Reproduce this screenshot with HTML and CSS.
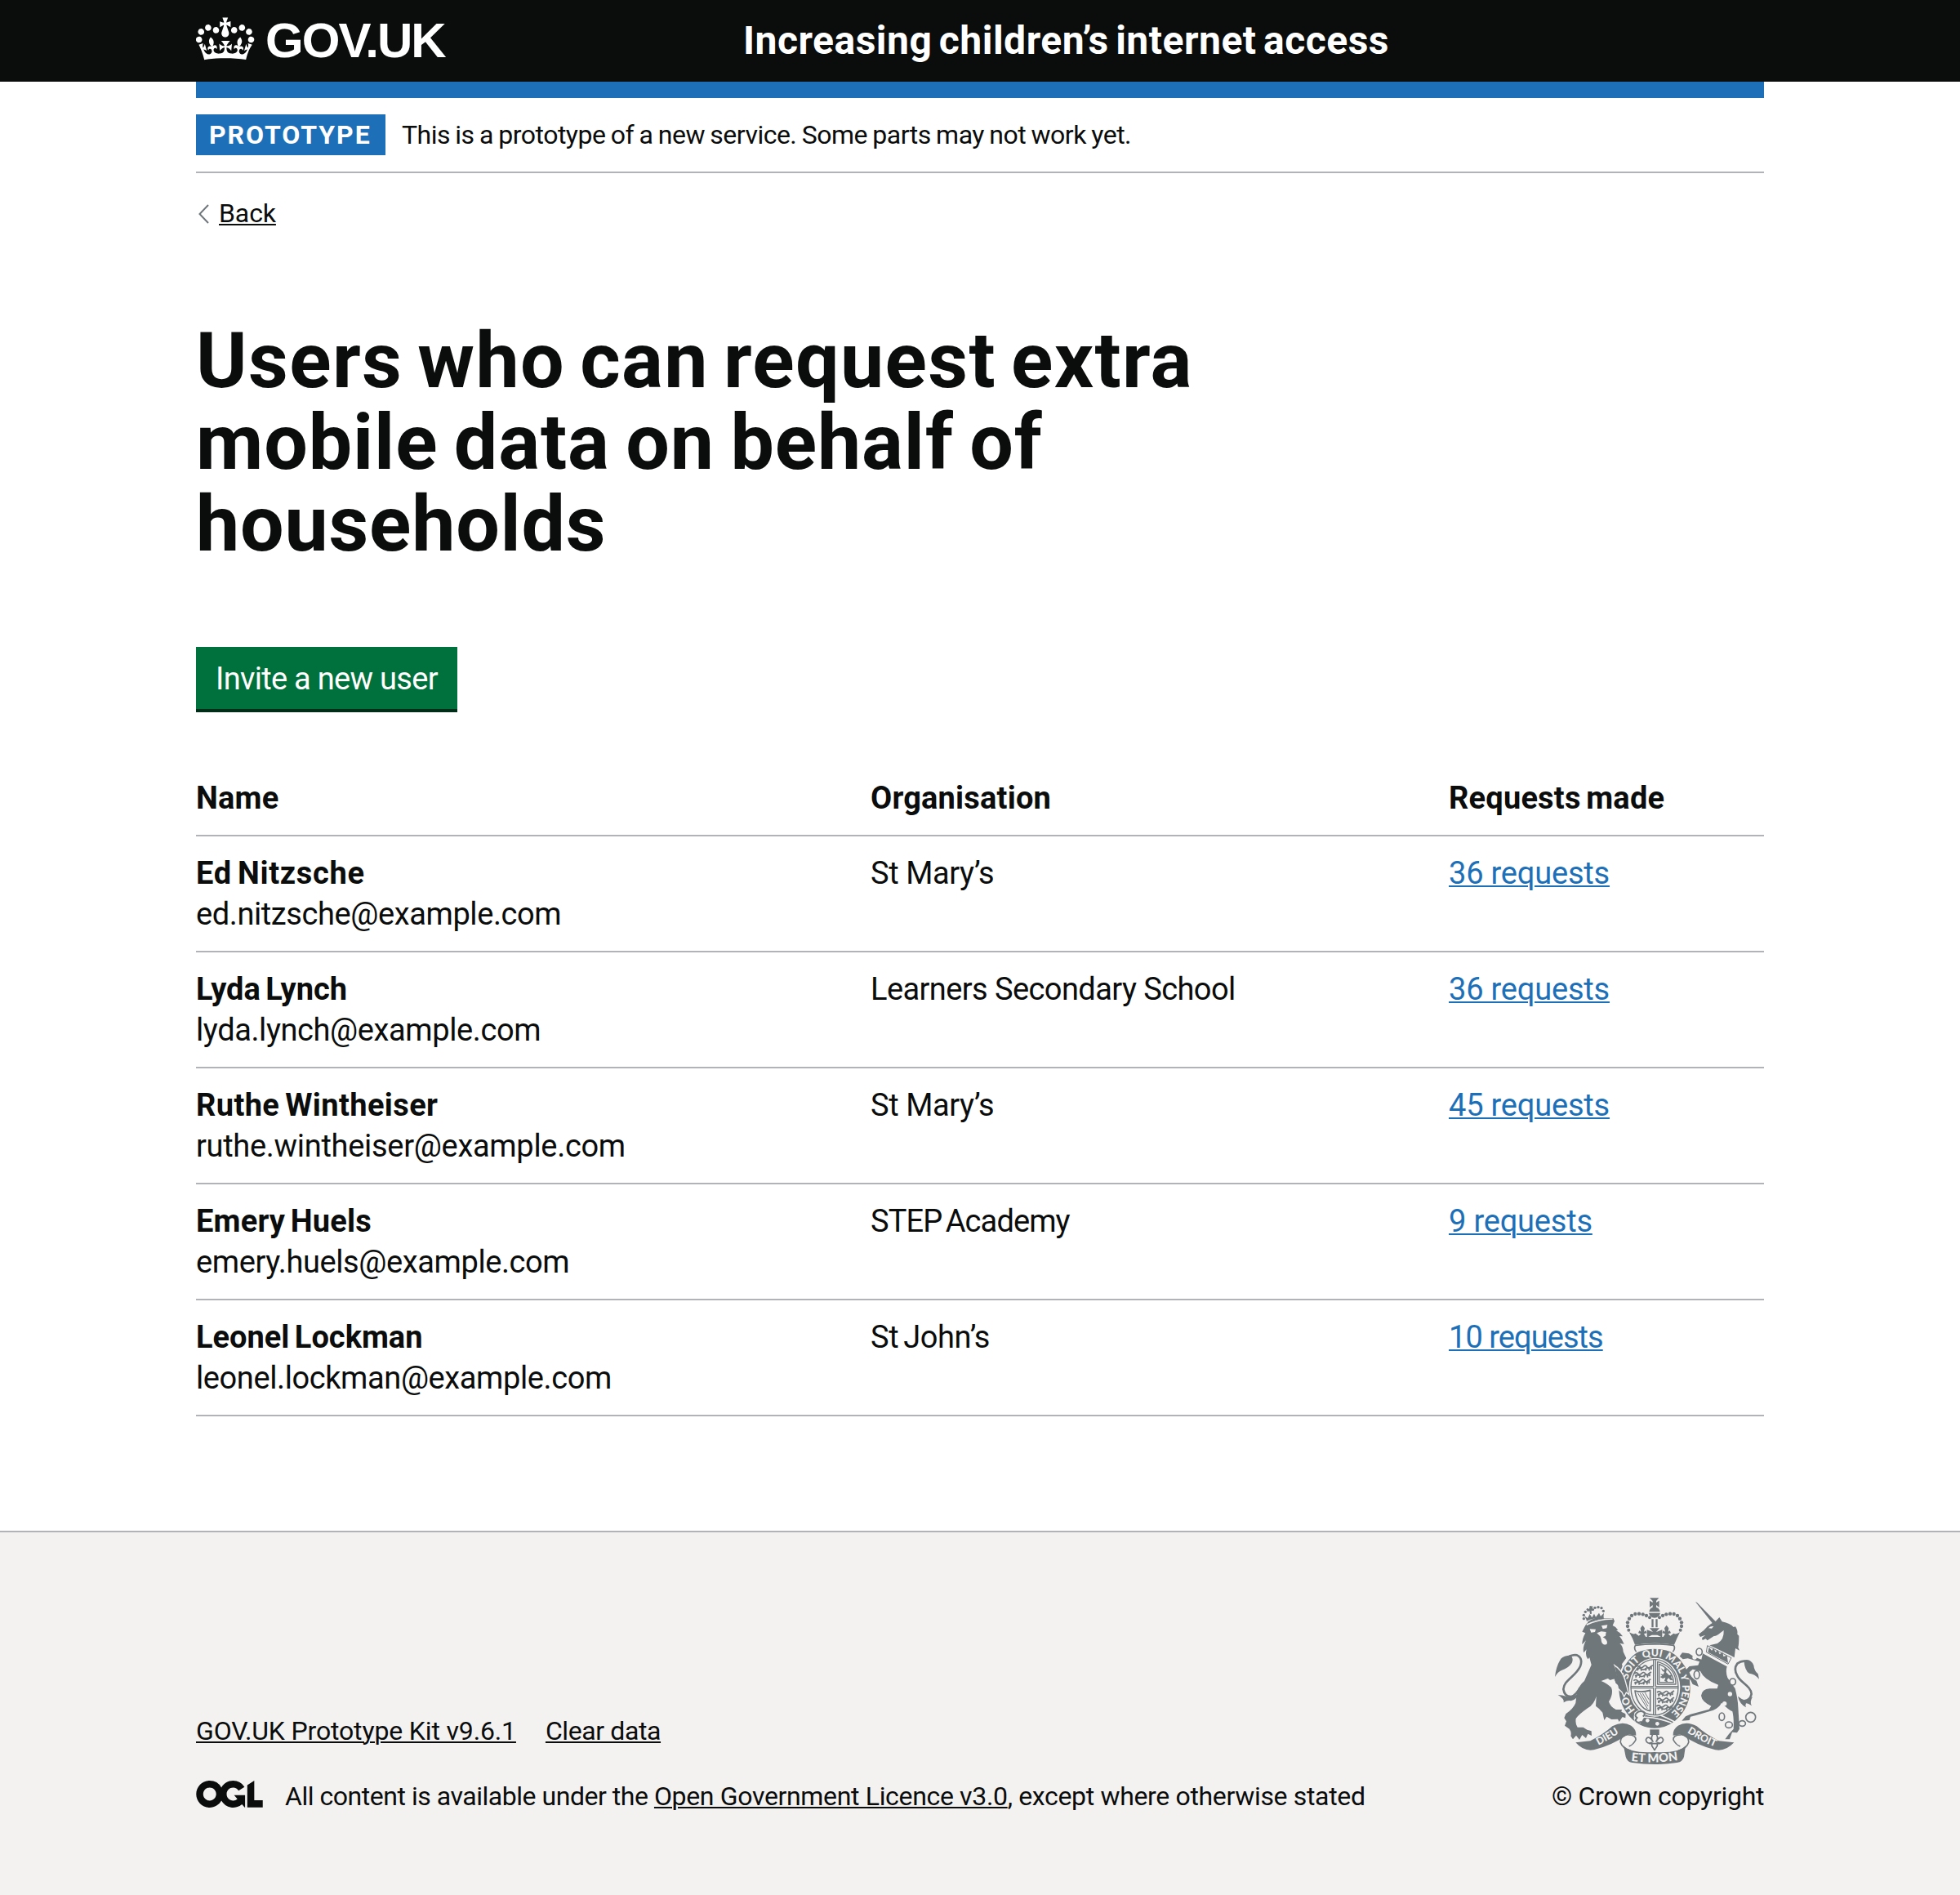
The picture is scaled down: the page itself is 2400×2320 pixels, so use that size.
FILE: index.html
```
<!DOCTYPE html>
<html lang="en">
<head>
<meta charset="utf-8">
<title>Users who can request extra mobile data on behalf of households</title>
<link rel="stylesheet" href="styles.css">
</head>
<body>
<header class="header">
  <div class="container header-inner">
    <a class="logo" href="#">
      <svg class="crown" viewBox="0 0 36 32" aria-hidden="true"><path fill="currentColor" fill-rule="evenodd" d="M6.7 12.2c1 .4 2.1-.1 2.5-1s-.1-2.1-1-2.5c-1-.4-2.1.1-2.5 1-.4 1 0 2.1 1 2.5m-4.3 2.5c1 .4 2.1-.1 2.5-1s-.1-2.1-1-2.5c-1-.4-2.1.1-2.5 1-.5 1 0 2.1 1 2.5m-1.3 4.8c1 .4 2.1-.1 2.5-1 .4-1-.1-2.1-1-2.5-1-.4-2.1.1-2.5 1-.4 1 0 2.1 1 2.5m10.4-5.8c1 .4 2.1-.1 2.5-1s-.1-2.1-1-2.5c-1-.4-2.1.1-2.5 1s0 2.1 1 2.5m17.4-1.5c-1 .4-2.1-.1-2.5-1s.1-2.1 1-2.5c1-.4 2.1.1 2.5 1 .5 1 0 2.1-1 2.5m4.3 2.5c-1 .4-2.1-.1-2.5-1s.1-2.1 1-2.5c1-.4 2.1.1 2.5 1 .5 1 0 2.1-1 2.5m1.3 4.8c-1 .4-2.1-.1-2.5-1-.4-1 .1-2.1 1-2.5 1-.4 2.1.1 2.5 1 .4 1 0 2.1-1 2.5m-10.4-5.8c-1 .4-2.1-.1-2.5-1s.1-2.1 1-2.5c1-.4 2.1.1 2.5 1s0 2.1-1 2.5m-5.3-4.9 2.4 1.3V6.5l-2.4.8c-.1-.1-.1-.1-.2-.1s1-3 1-3h-3.4l1 3c-.1.1-.2.1-.2.1-.1.1-2.4-.7-2.4-.7v3.5L17 8.8c-.1.1 0 .2.1.3l-1.4 4.2c-.1.2-.1.4-.1.7 0 1.1.8 2.1 1.9 2.2h.8c1.1-.1 1.9-1.1 1.9-2.2 0-.2-.1-.4-.1-.7l-1.4-4.2c.1-.1.1-.2.1-.3m-1 20.3c4.6 0 8.9.3 12.8.9 1.1-4.6 2.4-7.2 3.8-9.1l-2.6-.9c.3 1.3.3 1.9 0 2.8-.4-.4-.8-1.2-1.1-2.4l-1.2 4.2c.8-.5 1.4-.9 2-.9-1.2 2.6-2.7 3.2-3.6 3-1.2-.2-1.7-1.3-1.5-2.2.3-1.3 1.6-1.6 2.2-.1 1.2-2.4-.8-3.1-2.1-2.4 1.9-1.9 2.2-3.6.6-5.7-2.2 1.7-2.2 3.3-1.2 5.6-1.3-1.5-3.3-.7-2.5 1.7.9-1.4 2.1-.5 2 .8-.2 1.2-1.7 2.1-3.7 1.9-2.8-.2-3-2.2-3-3.7.7-.1 1.9.5 2.9 2l.4-4.4c-1.1 1.2-2.2 1.4-3.3 1.4.4-1.2 2.1-3.1 2.1-3.1h-5.4s1.8 1.9 2.1 3.1c-1.1 0-2.3-.3-3.3-1.4l.4 4.4c1-1.5 2.2-2.1 2.9-2-.1 1.6-.2 3.5-3 3.7-1.9.2-3.5-.7-3.7-1.9-.2-1.3 1-2.2 1.9-.8.7-2.4-1.2-3.1-2.5-1.7 1-2.3 1-4-1.2-5.6-1.6 2-1.3 3.8.6 5.7-1.3-.7-3.2 0-2.1 2.4.6-1.5 1.9-1.1 2.2.1.2.9-.4 2-1.5 2.2-1 .2-2.4-.4-3.6-3 .6 0 1.2.4 2 .9l-1.2-4.2c-.3 1.1-.7 1.9-1.1 2.4-.3-.8-.2-1.5 0-2.8l-2.6.9C2.7 23 4 25.5 5.1 30.1c3.9-.7 8.2-1 12.9-1"/></svg>
      <span class="logo-text">GOV.UK</span>
    </a>
    <a class="service-name" href="#">Increasing children’s internet access</a>
  </div>
</header>

<div class="container">
  <div class="blue-bar"></div>
  <div class="phase-banner">
    <strong class="tag">PROTOTYPE</strong>
    <span class="phase-text">This is a prototype of a new service. Some parts may not work yet.</span>
  </div>
  <a class="back" href="#">
    <svg class="chevron" viewBox="0 0 18 26" aria-hidden="true"><path d="M15 2 4.500 13 15 24" fill="none" stroke="#6f777b" stroke-width="2"/></svg>
    <span class="back-text">Back</span>
  </a>

  <main class="main">
    <h1 class="heading">
      <span class="line-a">Users who can request extra</span>
      <span class="line-b">mobile data on behalf of</span>
      <span class="line-c">households</span>
    </h1>
    <a class="button" href="#">Invite a new user</a>
    <table class="table">
      <colgroup><col class="col-name"><col class="col-org"><col class="col-requests"></colgroup>
      <thead>
        <tr><th>Name</th><th>Organisation</th><th>Requests made</th></tr>
      </thead>
      <tbody>
        <tr><td><b class="wide">Ed Nitzsche</b><br>ed.nitzsche@example.com</td><td>St Mary’s</td><td><a class="link" href="#">36 requests</a></td></tr>
        <tr><td><b class="tight">Lyda Lynch</b><br>lyda.lynch@example.com</td><td class="org-long">Learners Secondary School</td><td><a class="link" href="#">36 requests</a></td></tr>
        <tr><td><b class="medium">Ruthe Wintheiser</b><br><span class="email-long">ruthe.wintheiser@example.com</span></td><td>St Mary’s</td><td><a class="link" href="#">45 requests</a></td></tr>
        <tr><td><b>Emery Huels</b><br>emery.huels@example.com</td><td class="org-tight">STEP Academy</td><td><a class="link" href="#">9 requests</a></td></tr>
        <tr><td><b class="tight">Leonel Lockman</b><br>leonel.lockman@example.com</td><td class="org-short">St John’s</td><td><a class="link link-tight" href="#">10 requests</a></td></tr>
      </tbody>
    </table>
  </main>
</div>

<footer class="footer">
  <div class="container footer-inner">
    <div class="footer-meta">
      <div class="footer-links">
        <a class="kit" href="#">GOV.UK Prototype Kit v9.6.1</a>
        <a class="clear" href="#">Clear data</a>
      </div>
      <div class="licence">
        <svg class="ogl" viewBox="0 0 483.200 195.700" aria-hidden="true"><path fill="currentColor" d="M421.500 142.800V.1l-50.700 32.300v161.100h112.400v-50.700zm-122.300-9.600A47.120 47.120 0 0 1 221 97.800c0-26 21.100-47.100 47.100-47.100 16.700 0 31.400 8.700 39.700 21.800l42.700-27.200A97.630 97.630 0 0 0 268.100 0c-36.500 0-68.300 20.100-85.100 49.700A98 98 0 0 0 97.800 0C43.900 0 0 43.900 0 97.800s43.900 97.800 97.800 97.800c36.500 0 68.300-20.100 85.100-49.700a97.760 97.760 0 0 0 149.600 25.400l19.400 22.200h3v-87.800h-80l24.300 27.500zM97.800 145c-26 0-47.100-21.100-47.100-47.100s21.100-47.100 47.100-47.100 47.100 21.100 47.100 47.100S123.800 145 97.800 145"/></svg>
        <span class="licence-text"><span class="licence-lead">All content is available under the </span><a href="#">Open Government Licence v3.0</a>, except where otherwise stated</span>
      </div>
    </div>
    <a class="copyright" href="#">
      <svg class="crest" viewBox="60 72 780 630" role="img" aria-label="Royal coat of arms">
        <defs>
          <path id="garter" d="M438 523A102 115 0 0 1 438 293A102 115 0 0 1 438 523"/>
          <path id="dieu" d="M213 629Q262 607 325 564"/>
          <path id="droit" d="M547 566Q610 608 676 633"/>
          <path id="etmon" d="M348 677Q438 689 528 674"/>
          <g id="lion-passant" fill="none" stroke="#6f777b" stroke-width="5">
            <path d="M0 4q8-7 14 0t14-1 14 2 12-3M3 12q10-6 18 0t16-2 16 2M5 18l5-7M19 19l4-8M36 18l3-8M50 18l-2-9M57 14V1l6-3"/>
          </g>
        </defs>
        <!-- lion supporter -->
        <g class="ink">
          <path d="M188 173Q230 150 286 153L291 164 284 180Q296 184 304 197L297 198Q310 204 321 220L309 219Q318 230 326 248L310 246Q322 255 323 277L334 300 318 322 324 345 345 382 346 432 335 425 326 442 320 424 306 414 307 394 296 392 290 376 276 380 266 375 242 384Q266 395 279 408 288 430 270 460 276 480 296 489L318 489 316 497 332 505 331 520 320 516 308 534 303 524 280 525 262 515 253 528 247 500Q236 485 222 476L224 440Q216 470 192 484 158 508 149 522 146 542 155 554L176 554 190 563 206 568 207 585 193 578 186 594 172 582 162 600 150 584 138 598 130 586Q134 572 125 560L108 548 114 532 106 520 112 505Q140 485 148 465L152 430Q160 400 180 384L206 325 199 298 193 304Q182 290 188 268L178 280Q172 262 186 235L172 250Q172 228 184 208L172 203Q180 185 188 173Z"/>
          <path d="M192 167Q220 148 250 147L252 155Q215 158 192 173Z"/>
          <path d="M188 160 180 145 192 153 200 138 208 151 216 137 222 149 234 134 240 146 252 134 250 150Q215 152 188 164Z"/>
          <path d="M200 108l12 2-3 7 8 2-3 8-8-2 1 12-6 1-2-11-8 3-1-7 8-4z"/>
          <circle cx="178" cy="155" r="5"/><circle cx="178" cy="142" r="5"/><circle cx="184" cy="130" r="5"/><circle cx="192" cy="121" r="4"/><circle cx="219" cy="115" r="5"/><circle cx="231" cy="113" r="5"/><circle cx="243" cy="116" r="5"/><circle cx="250" cy="127" r="5"/>
          <path d="M72 369Q76 330 94 302 106 290 128 290 142 298 134 318 120 338 98 344 82 350 72 369Z"/>
          <path d="M83 435Q100 435 112 440 132 448 158 430 154 452 131 457 118 454 104 463 108 450 83 435Z"/>
        </g>
        <path class="stroke" stroke-width="8" d="M108 306Q130 285 153 289 176 300 165 330C148 368 105 380 103 414Q107 442 132 441 150 436 164 408"/>
        <path class="paper" d="M200 193l22 1-3 10-14 2zM243 181l22-3-3 12-14 3zM226 208l16-6 18 2-2 14-10 5q16 8 16 22-3 8-13 5-9-5-9-19l-4-11z"/>
        <path class="paper-stroke" d="M188 178Q230 157 284 156"/>
        <!-- royal crown -->
        <g class="ink">
          <path d="M420 79h34l-10 11v6l11-7v25l-11-9v9h-13v-9l-11 9V89l11 7v-6z"/>
          <path d="M418 130q2-16 20-18 18 2 20 18zM417 134h42q-4 17-21 18-17-1-21-18zM427 157h7v30h-7zM442 157h7v30h-7z"/>
          <path d="M420 190h36l-12 14 22-8v28l-18-9h-20l-18 9v-28l22 8z"/>
          <path d="M345 205Q360 215 368 209L380 218 388 211 378 208 382 199 388 203 386 190 394 179 402 190 399 203 406 199 410 208 399 211 406 222 438 222 470 222 477 211 466 208 470 199 477 203 474 190 482 179 490 190 488 203 494 199 498 208 488 211 496 218 508 209Q516 215 531 205 520 227 510 251 438 240 366 251 358 227 345 205Z"/>
          <circle cx="339" cy="183" r="6.500"/><circle cx="339" cy="169" r="6.500"/><circle cx="345" cy="155" r="6.500"/><circle cx="354" cy="144" r="6.500"/><circle cx="367" cy="138" r="6.500"/><circle cx="381" cy="137" r="6.500"/><circle cx="395" cy="139" r="6.500"/><circle cx="408" cy="144" r="6.500"/><circle cx="420" cy="151" r="6"/><circle cx="343" cy="197" r="6"/>
          <circle cx="537" cy="183" r="6.500"/><circle cx="537" cy="169" r="6.500"/><circle cx="531" cy="155" r="6.500"/><circle cx="522" cy="144" r="6.500"/><circle cx="509" cy="138" r="6.500"/><circle cx="495" cy="137" r="6.500"/><circle cx="481" cy="139" r="6.500"/><circle cx="468" cy="144" r="6.500"/><circle cx="456" cy="151" r="6"/><circle cx="533" cy="197" r="6"/>
        </g>
        <!-- garter and shield -->
        <ellipse class="ink" cx="438" cy="409" rx="134" ry="151" stroke="#f3f2f1" stroke-width="6"/>
        <path class="paper" d="M366 252Q438 242 510 252 518 262 506 280 438 252 370 280 358 262 366 252Z"/>
        <path class="stroke" stroke-width="5" d="M368 253Q438 244 508 253 516 264 505 277M368 253Q360 264 371 277"/>
        <ellipse class="paper" cx="438" cy="407" rx="94" ry="108"/>
        <ellipse class="stroke" stroke-width="4" cx="438" cy="407" rx="87" ry="102"/>
        <path class="stroke" stroke-width="4" d="M434 306v98h-83M442 306v98h83M351 410h83v97M525 410h-83v97"/>
        <use href="#lion-passant" x="369" y="328"/><use href="#lion-passant" x="363" y="353"/><use href="#lion-passant" x="361" y="379"/>
        <use href="#lion-passant" x="447" y="422"/><use href="#lion-passant" x="447" y="447"/><use href="#lion-passant" x="445" y="473"/>
        <path class="stroke" stroke-width="4" d="M449 313v83h67Q518 335 449 313ZM455 322v67h53Q506 345 455 322Z"/>
        <path class="ink" d="M461 336l12 9 2-9 8 6-3 10 12 11 10-3-3 10 6 12-9-2-7-7-6 8 5 8-14-5 4-13-10 4-10-6 8-4-7-7 11 2 4-9-7-4z"/>
        <path class="stroke" stroke-width="5" d="M366 420Q388 428 422 418V494Q404 491 391 477 370 454 366 420Z"/>
        <path class="stroke" stroke-width="3" d="M376 428l36 58M385 429l29 48M394 429l22 38M403 427l14 25"/>
        <g class="motto" font-size="37" text-anchor="middle">
          <text><textPath href="#garter" startOffset="16%">HO</textPath></text>
          <text><textPath href="#garter" startOffset="35.500%">SOIT</textPath></text>
          <text><textPath href="#garter" startOffset="48.800%">QUI</textPath></text>
          <text><textPath href="#garter" startOffset="61.500%">MAL</textPath></text>
          <text><textPath href="#garter" startOffset="70%">Y</textPath></text>
          <text><textPath href="#garter" startOffset="82%">PENSE</textPath></text>
        </g>
        <path class="paper-stroke" d="M362 522Q420 506 500 538M460 510Q485 520 512 534"/>
        <circle class="paper" cx="412" cy="529" r="7"/><circle class="paper" cx="448" cy="541" r="7"/>
        <path class="paper" d="M364 500q12-12 28-8l12 18q-8 14-18 30l-16 0q-12-16-6-40z"/>
        <path class="stroke" stroke-width="6" d="M371 503q12-13 27-5 8 9-3 16M371 503q-8 10 3 16-12 12 4 18l12-3"/>
        <!-- paw resting over the garter -->
        <path class="ink" d="M290 326Q318 343 329 378L344 434 334 426 326 442 318 425 304 412Z" stroke="#f3f2f1" stroke-width="4"/>
        <path class="ink" d="M270 320 291 328 312 412 304 400 296 392 290 376 272 380Z"/>
        <!-- unicorn supporter -->
        <g class="ink">
          <path d="M588 93 594 96 662 165 676 150 686 166Q716 172 728 186L735 184Q745 200 742 212L748 218Q748 250 745 260L750 272 735 264 731 298 718 290 640 253 669 246Q694 232 692 198L680 207Q665 220 656 219L632 235 626 229 614 234 612 226 625 215 606 222 600 212Q620 200 632 184L642 176 650 171Z"/>
          <path d="M615 283 704 331Q698 350 706 372L734 412Q744 450 745 480L750 560 741 574 723 572 714 598 697 598Q708 580 728 560 730 520 724 496 710 490 684 464 675 482 654 491L588 511 570 515 566 528 538 530 552 514 570 506 638 488 646 476Q612 460 609 438 612 414 640 412L668 412 672 398Q620 380 606 348L578 341 566 352Q570 372 592 383L600 405 578 396 570 380Q552 364 552 344L566 330 598 326 603 313 560 301 542 304 530 293 540 280 564 283 583 295 610 305Z"/>
          <path d="M766 308Q790 300 802 326 804 346 818 358L822 377Q806 358 786 356 770 348 766 308Z"/>
          <path d="M744 440Q758 452 774 456 790 446 798 442 786 462 795 475 782 466 774 466 770 474 774 481 750 468 744 440Z"/>
        </g>
        <path class="paper" d="M636 190q8-9 19-7l-7 8z"/>
        <path class="stroke" stroke-width="8" d="M790 318Q765 303 742 320 727 340 742 365C755 392 792 402 794 432Q789 454 768 457"/>
        <path class="paper" d="M632 252 722 299 708 322 628 278Z"/>
        <path class="stroke" stroke-width="3" d="M632 254 720 299 708 322 628 278Z"/>
        <path class="ink" d="M634 278 638 260 648 272 655 264 662 279 670 270 677 286 688 278 691 294 704 290 708 318Z"/>
        <g class="ring">
          <ellipse cx="602" cy="277" rx="11" ry="13"/><ellipse cx="593" cy="361" rx="10" ry="15"/><ellipse cx="725" cy="387" rx="11" ry="12"/><ellipse cx="685" cy="515" rx="10" ry="14"/><ellipse cx="711" cy="545" rx="13" ry="11"/><ellipse cx="760" cy="540" rx="12" ry="10"/><circle cx="791" cy="517" r="18"/>
        </g>
        <circle class="paper" cx="585" cy="297" r="8"/><circle class="paper" cx="715" cy="432" r="8"/><circle class="paper" cx="695" cy="467" r="8"/>
        <!-- motto ribbon -->
        <g class="ink">
          <path d="M148 610 202 604Q250 580 283 550 320 530 352 548 372 562 370 584L340 580Q280 622 215 637 178 644 148 610Z"/>
          <path d="M730 610 674 604Q626 580 593 550 556 530 524 548 504 562 506 584L536 580Q596 622 661 637 698 644 730 610Z"/>
          <path d="M324 622Q350 650 438 645 526 650 552 622L546 662Q542 680 520 684 438 696 356 684 336 680 332 662Z"/>
        </g>
        <path class="stroke" stroke-width="5" d="M342 580Q310 585 313 610 320 632 350 640M342 582Q370 582 369 600 360 618 344 624M534 580Q566 585 563 610 556 632 526 640M534 582Q506 582 507 600 516 618 532 624"/>
        <path class="ink" d="M421 562h34v20h-34z"/>
        <path class="stroke" stroke-width="5" d="M438 570Q420 592 432 606 414 580 406 600 410 618 428 610L428 622 438 638 448 622 448 610Q466 618 470 600 462 580 444 606 456 592 438 570ZM418 614h40"/>
        <g class="motto" text-anchor="middle">
          <text font-size="37"><textPath href="#dieu" startOffset="50%">DIEU</textPath></text>
          <text font-size="37"><textPath href="#droit" startOffset="48%">DROIT</textPath></text>
          <text font-size="44"><textPath href="#etmon" startOffset="50%">ET MON</textPath></text>
        </g>
      </svg>
      <span class="copyright-text">© Crown copyright</span>
    </a>
  </div>
</footer>
</body>
</html>
```
FILE: styles.css
```
* { box-sizing: border-box; }
body {
  margin: 0;
  background: #fff;
  color: #0b0c0c;
  font-family: Roboto, "Liberation Sans", sans-serif;
  font-size: 38px;
  line-height: 50px;
  letter-spacing: -0.4px;
}
a {
  color: inherit;
  text-decoration-thickness: 2px;
  text-underline-offset: 2px;
}
svg { display: block; flex: none; }
.container { width: 1920px; margin: 0 auto; }

.header { background: #0b0c0c; color: #fff; }
.header-inner { display: flex; height: 100px; }
.header a { text-decoration: none; }
.logo { display: flex; width: 670px; gap: 13px; }
.crown { width: 72px; height: 64px; margin-top: 13px; }
.logo-text {
  font: 700 60px/100px "Liberation Sans", sans-serif;
  letter-spacing: -1.9px;
}
.service-name {
  font-size: 48px;
  font-weight: 700;
  line-height: 99px;
  letter-spacing: 0.5px;
  word-spacing: -4px;
  white-space: nowrap;
}

.blue-bar { height: 20px; background: #1d70b8; }
.phase-banner {
  display: flex;
  gap: 20px;
  padding: 20px 0;
  border-bottom: 2px solid #b1b4b6;
  font-size: 32px;
}
.tag {
  width: 232px;
  padding-left: 16px;
  background: #1d70b8;
  color: #fff;
  letter-spacing: 1.95px;
}
.phase-text { letter-spacing: -0.52px; word-spacing: -1px; }
.back {
  display: flex;
  gap: 10px;
  width: max-content;
  height: 40px;
  margin-top: 30px;
  font-size: 32px;
  line-height: 40px;
  text-decoration: none;
}
.chevron { width: 18px; height: 26px; margin-top: 7px; }
.back-text {
  margin-top: -1px;
  text-decoration: underline 2px;
  text-underline-offset: 2px;
  letter-spacing: -0.1px;
}

.main { padding-top: 110px; }
.heading {
  display: flex;
  flex-direction: column;
  margin: 0;
  font-size: 95px;
  font-weight: 700;
  line-height: 100px;
}
.line-a { letter-spacing: 1.4px; word-spacing: -7px; }
.line-b { letter-spacing: 0.9px; word-spacing: -5px; }
.line-c { letter-spacing: 0.8px; }
.button {
  display: block;
  width: 320px;
  height: 76px;
  margin-top: 100px;
  padding: 14px 0 12px 24px;
  background: #00703c;
  box-shadow: 0 4px 0 #002d18;
  color: #fff;
  letter-spacing: -0.7px;
  text-decoration: none;
}
.table {
  width: 100%;
  margin-top: 64px;
  border-collapse: separate;
  border-spacing: 0;
  table-layout: fixed;
}
.col-name { width: 826px; }
.col-org { width: 708px; }
.table th, .table td {
  padding: 20px 0;
  border-bottom: 2px solid #b1b4b6;
  text-align: left;
  vertical-align: top;
}
.table th, .table b { font-weight: 700; letter-spacing: 0.2px; word-spacing: -3px; }
.table .wide { letter-spacing: 0.7px; }
.table .medium { letter-spacing: 0.4px; }
.table .tight { letter-spacing: 0; }
.table .org-long { letter-spacing: -0.58px; }
.table .org-tight { letter-spacing: -0.9px; word-spacing: -4px; }
.table .org-short { letter-spacing: -0.4px; word-spacing: -3px; }
.email-long { letter-spacing: -0.3px; }
.link { color: #1d70b8; letter-spacing: -0.2px; }
.link-tight { letter-spacing: -0.95px; }

.footer {
  height: 446px;
  margin-top: 140px;
  border-top: 2px solid #b1b4b6;
  background: #f3f2f1;
  font-size: 32px;
  line-height: 40px;
}
.footer-inner {
  display: flex;
  justify-content: space-between;
  align-items: flex-end;
  padding-top: 78px;
}
.footer-meta { display: flex; flex-direction: column; gap: 40px; }
.footer-links { display: flex; gap: 36px; }
.kit { letter-spacing: -0.15px; }
.clear { letter-spacing: -0.4px; }
.licence { display: flex; gap: 27px; }
.ogl { width: 82px; height: 33px; margin-top: 1px; }
.licence-text { letter-spacing: -0.34px; white-space: nowrap; }
.licence-lead { letter-spacing: -0.47px; }
.copyright {
  display: flex;
  flex-direction: column;
  gap: 15px;
  width: 260px;
  text-decoration: none;
  white-space: nowrap;
}
.copyright-text { letter-spacing: -0.28px; }
.crest { width: 260px; height: 210px; }
.ink { fill: #6f777b; }
.paper { fill: #f3f2f1; }
.stroke { fill: none; stroke: #6f777b; stroke-linejoin: round; }
.paper-stroke { fill: none; stroke: #f3f2f1; stroke-width: 5; }
.ring { fill: #f3f2f1; stroke: #6f777b; stroke-width: 5; }
.motto { fill: #f3f2f1; font-family: Lato, sans-serif; font-weight: 900; letter-spacing: 0; }
```
